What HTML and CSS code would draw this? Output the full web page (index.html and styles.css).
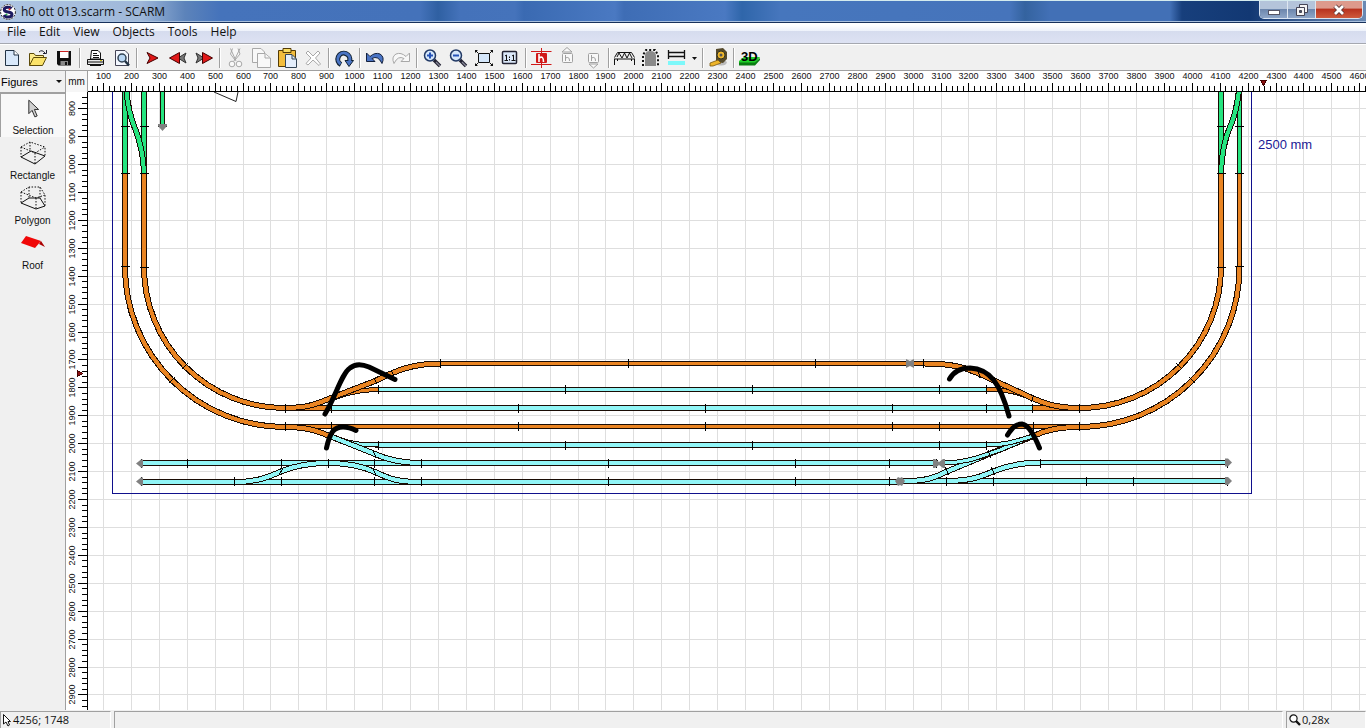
FILE: index.html
```html
<!DOCTYPE html>
<html lang="en">
<head>
<meta charset="utf-8">
<title>h0 ott 013.scarm - SCARM</title>
<link rel="stylesheet" href="styles.css">
</head>
<body>
<header class="titlebar">
  <svg class="app-icon" viewBox="0 0 16 16" aria-hidden="true">
    <circle cx="8" cy="8" r="7.8" fill="#fff"/>
    <circle cx="8" cy="8" r="7.4" fill="none" stroke="#222" stroke-dasharray="2 1"/>
    <path d="M11.5 4.5Q10.5 3.2 8 3.2Q4.200 3.2 4.200 5.600Q4.200 7.600 8 8Q12 8.400 12 10.600Q12 13 8 13Q5 13 4 11" fill="none" stroke="#1d1b60" stroke-width="3"/>
    <circle cx="9.500" cy="5.200" r="1" fill="#e22"/><circle cx="6.500" cy="10.600" r="1" fill="#2a4"/>
  </svg>
  <h1 class="title">h0 ott 013.scarm - SCARM</h1>
  <div class="win-buttons">
    <button class="win-btn" aria-label="Minimize"><svg viewBox="0 0 14 14"><rect x="1.500" y="7.500" width="11" height="4" fill="#fff" stroke="#556"/></svg></button>
    <button class="win-btn" aria-label="Restore"><svg viewBox="0 0 14 14"><path d="M4.500 1.500h8v8h-8z" fill="#f4f4f4" stroke="#445"/><path d="M1.500 4.500h8v8h-8z" fill="#f4f4f4" stroke="#445"/><path d="M4.500 7.500h2v2h-2z" fill="#456" stroke="#445"/></svg></button>
    <button class="win-btn close" aria-label="Close"><svg viewBox="0 0 14 14"><path d="M3 3L11 11M11 3L3 11" stroke="#533" stroke-width="4.500"/><path d="M3 3L11 11M11 3L3 11" stroke="#fff" stroke-width="2.800"/></svg></button>
  </div>
</header>
<nav class="menubar">
  <button>File</button><button>Edit</button><button>View</button><button>Objects</button><button>Tools</button><button>Help</button>
</nav>
<div class="toolbar" role="toolbar">
  <button aria-label="New"><svg viewBox="-12 -12 26 24"><path d="M-6.500-7.500H2L6.500-3V7.500H-6.500Z" fill="#d8e8fa" stroke="#234"/><path d="M2-7.500V-3H6.500" fill="#fff" stroke="#234"/></svg></button>
  <button aria-label="Open"><svg viewBox="-12 -12 26 24"><path d="M-8.500 7.500V-4.500H-4L-2.500-2.500H5.500V0" fill="#fdeb8c" stroke="#5c4a08"/><path d="M-8.500 7.500L-4.500-.5H8.500L4.500 7.500Z" fill="#fbe36a" stroke="#5c4a08"/><path d="M1-6Q4-9 7-5M8.500-8V-4.500H5" fill="none" stroke="#223"/></svg></button>
  <button aria-label="Save"><svg viewBox="-12 -12 26 24"><path d="M-7-7H7V7.500H-5.500L-7 6Z" fill="#111"/><path d="M-4-7H4.500V0H-4Z" fill="#fff"/><path d="M-4-7H4.500V-6H-4Z" fill="#c22"/><path d="M-3.500 3H4V7H-3.500Z" fill="#888"/><path d="M1 4H3V7H1Z" fill="#111"/></svg></button>
  <i class="sep"></i>
  <button aria-label="Print"><svg viewBox="-12 -12 26 24"><path d="M-3.500-7.500H3L5.500-5V1H-4.500Z" fill="#fff" stroke="#111"/><path d="M-2-4.500H2M-2-2.500H4M-2-.5H4" stroke="#111"/><path d="M-7.500 1.500H8.500V6.500H-7.500Z" fill="#e8e8e8" stroke="#111"/><path d="M-7 4H8M-5 7.500H6" stroke="#111"/><path d="M5 2.500H7" stroke="#cb1" /></svg></button>
  <button aria-label="Print preview"><svg viewBox="-12 -12 26 24"><path d="M-5.500-7.500H4L7.500-4V7.500H-5.500Z" fill="#f4f8ff" stroke="#445"/><circle cx="1" cy="0" r="4" fill="#b9d7f5" stroke="#345" stroke-width="1.500"/><path d="M4 3L8 7.500" stroke="#234" stroke-width="2.500"/></svg></button>
  <i class="sep"></i>
  <button aria-label="Start point"><svg viewBox="-12 -12 26 24"><path d="M-5-5.500L6 0L-5 5.500L-2 0Z" fill="#e01818" stroke="#400"/></svg></button>
  <button aria-label="Previous"><svg viewBox="-12 -12 26 24"><path d="M8-5L0 0L8 5L6 0Z" fill="#777" stroke="#333"/><path d="M1.500-5.500L-8.500 0L1.500 5.500V0Z" fill="#e01818" stroke="#400"/></svg></button>
  <button aria-label="Next"><svg viewBox="-12 -12 26 24"><path d="M-8-5L0 0L-8 5L-6 0Z" fill="#777" stroke="#333"/><path d="M-1.500-5.500L8.500 0L-1.500 5.500V0Z" fill="#e01818" stroke="#400"/></svg></button>
  <i class="sep"></i>
  <button aria-label="Cut" disabled><svg viewBox="-12 -12 26 24" fill="#f8f8f8" stroke="#a8a8a8"><path d="M-4.500-9.500L1 3M5-9.500L-1 3M-2.500-9.500L-4.500-4L0 2L5-4L3-9.500"/><circle cx="-3" cy="6" r="2.800"/><circle cx="4" cy="6" r="2.800"/></svg></button>
  <button aria-label="Copy" disabled><svg viewBox="-12 -12 26 24" fill="#f8f8f8" stroke="#a8a8a8"><path d="M-8.500-9.500H0L3.500-6V4.500H-8.500Z"/><path d="M-3.500-4.500H4L9.500 0V9.500H-3.500Z"/><path d="M4-4V0H9"/></svg></button>
  <button aria-label="Paste"><svg viewBox="-12 -12 26 24"><path d="M-8.500-7.500H8.500V8.500H-8.500Z" fill="#f2bd3c" stroke="#543b05"/><path d="M-4-9.500H4V-5.500H-4Z" fill="#f8dc62" stroke="#543b05"/><path d="M-1.500-3.500H5L9.500 1V9.500H-1.500Z" fill="#e4eefb" stroke="#345"/><path d="M5-3V1H9" fill="none" stroke="#345"/></svg></button>
  <button aria-label="Delete" disabled><svg viewBox="-12 -12 26 24" fill="#fff" stroke="#a8a8a8"><path d="M-7-5L-5-7L0-2L5-7L7-5L2.500 0L7.500 6L6 7.500L0 2L-5 7L-7 5.500L-2 0Z"/></svg></button>
  <i class="sep"></i>
  <button aria-label="Rotate"><svg viewBox="-12 -12 26 24"><path d="M-3 6.500A6 6 0 1 1 5.500 3" fill="none" stroke="#123" stroke-width="5"/><path d="M1 2.500H9.500L5 8.500Z" fill="#4a74c4" stroke="#123"/><path d="M-3.500 6A6 6 0 1 1 5.500 3" fill="none" stroke="#4a74c4" stroke-width="3"/></svg></button>
  <i class="sep"></i>
  <button aria-label="Undo"><svg viewBox="-12 -12 26 24"><path d="M-8.500-5V3.500H0L-3 .5Q3-3 7 5.500Q10-1 5-4Q0-6-5-1.500Z" fill="#4a74c4" stroke="#13203d"/></svg></button>
  <button aria-label="Redo" disabled><svg viewBox="-12 -12 26 24"><path d="M8.500-5V3.500H0L3 .5Q-3-3-7 5.500Q-10-1-5-4Q0-6 5-1.500Z" fill="#f8f8f8" stroke="#a8a8a8"/></svg></button>
  <i class="sep"></i>
  <button aria-label="Zoom in"><svg viewBox="-12 -12 26 24"><path d="M2 2L8 8" stroke="#223" stroke-width="3.500"/><path d="M4 4L8 8" stroke="#889" stroke-width="1.200"/><circle cx="-2" cy="-2.500" r="5.500" fill="#d5e7fb" stroke="#223a66" stroke-width="1.500"/><path d="M-5-2.500H1M-2-5.500V.5" stroke="#2452b8" stroke-width="2"/></svg></button>
  <button aria-label="Zoom out"><svg viewBox="-12 -12 26 24"><path d="M2 2L8 8" stroke="#223" stroke-width="3.500"/><path d="M4 4L8 8" stroke="#889" stroke-width="1.200"/><circle cx="-2" cy="-2.500" r="5.500" fill="#d5e7fb" stroke="#223a66" stroke-width="1.500"/><path d="M-5-2.500H1" stroke="#2452b8" stroke-width="2"/></svg></button>
  <button aria-label="Fit to window"><svg viewBox="-12 -12 26 24"><path d="M-5.500-4.500H5.500V4.500H-5.500Z" fill="#d5e7fb" stroke="#111"/><path d="M-8.500-7.500L-6-5M8.500-7.500L6-5M-8.500 7.500L-6 5M8.500 7.500L6 5" stroke="#111"/><path d="M-9-5V-8H-6ZM9-5V-8H6ZM-9 5V8H-6ZM9 5V8H6Z" fill="#111"/></svg></button>
  <button aria-label="Actual size"><svg viewBox="-12 -12 26 24"><rect x="-7.500" y="-6.500" width="14" height="12" rx="1" fill="#dbe8fa" stroke="#223" stroke-width="1.500"/><path d="M-5-2L-3.500-3V2.500M-5.500 2.500H-2M2-2L3.500-3V2.500M1.500 2.500H5.500M-.5-1.500V0M-.5 1V2.500" fill="none" stroke="#111"/></svg></button>
  <i class="sep"></i>
  <button aria-label="Heights"><svg viewBox="-12 -12 26 24"><path d="M-10-6.500H10.500M-10 6.500H10.500M.5-10V10" stroke="#d01818"/><rect x="-5" y="-5" width="11" height="10" rx="1" fill="#d01818"/><path d="M-2-4V4M-2 0Q2.500-3 2.500 4" fill="none" stroke="#fff" stroke-width="1.600"/></svg></button>
  <button aria-label="Raise" disabled><svg viewBox="-12 -12 26 24" fill="#f8f8f8" stroke="#a0a0a0"><path d="M-5-6L0-10.500L5-6Z"/><rect x="-4.500" y="-4.500" width="10" height="9" rx="1"/><path d="M-1.500-3V3M-1.500 0Q2.500-2 2.500 3"/></svg></button>
  <button aria-label="Lower" disabled><svg viewBox="-12 -12 26 24" fill="#f8f8f8" stroke="#a0a0a0"><path d="M-4 6L.5 10L5 6Z"/><rect x="-4.500" y="-4.500" width="10" height="9" rx="1"/><path d="M-1.500-3V3M-1.500 0Q2.500-2 2.500 3"/></svg></button>
  <i class="sep"></i>
  <button aria-label="Bridge"><svg viewBox="-12 -12 26 24" fill="none" stroke="#111"><path d="M-9.500-.5L-6.500-5.500H7.500L10.500-.5M-10 1H11M-9.500 1V7M10.500 1V7M-6.500 1V3M7.500 1V3M-7-1L-5-5L-2 0L.5-5L3 0L5.500-5L8 0" /></svg></button>
  <button aria-label="Tunnel"><svg viewBox="-12 -12 26 24"><path d="M-5 8V-2Q-5-7 0-7Q6-7 6-2V8Z" fill="#8a8a8a"/><path d="M-7 8V-3L-4-8H5L8-3V8" fill="none" stroke="#111" stroke-width="2" stroke-dasharray="2 2"/></svg></button>
  <button aria-label="Track style"><svg viewBox="-12 -12 26 24"><path d="M-8-5.500H9M-8-1.500H9M-7.500-8V1M8.500-8V1" stroke="#111" stroke-width="1.300"/><path d="M-8 3H9V7H-8Z" fill="#7df8fa"/></svg></button>
  <button class="drop" aria-label="Track style options"><svg viewBox="0 0 11 24"><path d="M2 11H7L4.500 14Z" fill="#111"/></svg></button>
  <i class="sep"></i>
  <button aria-label="Measure"><svg viewBox="-12 -12 26 24"><path d="M-1 7Q8 9 9 4L6 2Z" fill="#bbb"/><path d="M-2-9L5-10L9-6V1L5 5L-2 4Z" fill="#554a2c"/><circle cx="3" cy="-3" r="4" fill="#f0b729" stroke="#332"/><circle cx="3" cy="-3" r="1.500" fill="#555"/><path d="M0 2L-8 5V8H-5L3 5Z" fill="#edb429" stroke="#775510" stroke-width=".8"/></svg></button>
  <i class="sep"></i>
  <button aria-label="3D view"><svg viewBox="-12 -12 26 24"><path d="M-10 3L-5-1H11L6 6H-10Z" fill="#1fd329"/><path d="M-10 4.500H6L11 0V2L6 7.500H-10Z" fill="#0a7d12"/><text class="label-3d" x="-8" y="3">3D</text></svg></button>
</div>
<main class="workspace">
  <aside class="palette">
    <div class="palette-head">
      <select class="palette-select" aria-label="Object library"><option>Figures</option></select>
      <svg class="caret" viewBox="0 0 6 4" aria-hidden="true"><path d="M0 0H6L3 3Z" fill="#111"/></svg>
    </div>
    <button class="tool active"><svg viewBox="0 0 28 28"><path d="M9.500 4.500V19L13 15.500L16 22.500L18.500 21.500L15.500 14.500H20Z" fill="#d0d0d0" stroke="#222"/></svg><span>Selection</span></button>
    <button class="tool"><svg viewBox="0 0 28 28" fill="none" stroke="#111"><path d="M2 18L12 12L26 17L16 25Z"/><path d="M2 8L11 3L26 8V17M2 8V18M2 8L16 14L26 8M16 14V25M11 3V12" stroke-dasharray="1.500 1.500"/></svg><span>Rectangle</span></button>
    <button class="tool"><svg viewBox="0 0 28 28" fill="none" stroke="#111"><path d="M2 19L10 14H21L26 22L17 25Z"/><path d="M2 8L10 3H21L26 11V22M2 8V19M2 8L17 14L26 11M17 14V25M10 3V14M21 3V14" stroke-dasharray="1.500 1.500"/></svg><span>Polygon</span></button>
    <button class="tool"><svg viewBox="0 0 28 28"><path d="M2 14L7 7L22 12L16 19Z" fill="#f00808"/><path d="M22 12L26 18L20 15Z" fill="#a00"/></svg><span>Roof</span></button>
  </aside>
  <div class="unit">mm</div>
  <svg class="ruler" id="ruler-x" role="img" aria-label="Horizontal ruler"></svg>
  <svg class="ruler" id="ruler-y" role="img" aria-label="Vertical ruler"></svg>
  <svg class="plan" id="plan" role="img" aria-label="Track plan">
    <g transform="translate(-88 -92)">
      <g id="grid"></g>
      <path class="bounds" d="M112.500 80V493.500H1251.500V80"/>
      <path class="thin" d="M214 92L236 101.500L238 92"/>
      <g id="tracks"></g>
      <g id="joints"></g>
      <g class="stops">
        <path d="M158 124H167V126L162.500 131L158 126Z"/>
        <path d="M136 463.500L141 459.500H143V467.500H141ZM136 481.500L141 477.500H143V485.500H141Z"/>
        <path d="M1232 462.500L1228 458.500H1225V466.500H1228ZM1232 481L1228 477H1225V485H1228Z"/>
        <path d="M906 359L910 361L914 359V368L910 366L906 368Z"/>
        <path d="M933 459H935L939 462L943 459H945V468H943L939 465L935 468H933Z"/>
        <path d="M895 481L898 477L900 478L902 477L905 481L902 486L900 485L898 486Z"/>
      </g>
      <g class="marks">
        <path d="M325 414C335 398 342 373 350 368C356 363 362 364 369 367L395 379.500"/>
        <path d="M326.500 448C330 432 334 427 343 427Q349 427 356 430.500"/>
        <path d="M949.500 379C954 371 962 368 970 368C990 369 1000 383 1009 416"/>
        <path d="M1007.500 435C1013 426 1017 424 1022 424C1029 425 1035 437 1039.500 448"/>
      </g>
      <text class="dimension" x="1258" y="149">2500 mm</text>
    </g>
  </svg>
</main>
<footer class="statusbar">
  <div class="cell coords"><svg viewBox="0 0 10 14" aria-hidden="true"><path d="M1.500 1.500V11L4 9L6 13L7.500 12L6 8.500H8.500Z" fill="#fff" stroke="#111"/></svg>4256; 1748</div>
  <div class="cell message"></div>
  <div class="cell scale"><svg viewBox="0 0 12 12" aria-hidden="true"><circle cx="4.500" cy="4.500" r="3.600" fill="#fff" stroke="#111" stroke-width="1.200"/><path d="M7 7L11 11" stroke="#111" stroke-width="2.400"/></svg>0,28x</div>
</footer>
<script src="script.js"></script>
</body>
</html>
```
FILE: styles.css
```css
* { box-sizing: border-box; }
body { margin: 0; height: 100vh; display: flex; flex-direction: column; overflow: hidden; background: #f0f0f0; color: #111; font: 12px "Open Sans", sans-serif; }
button { margin: 0; padding: 0; border: 0; background: none; color: inherit; font: inherit; }
svg { display: block; }

.titlebar { flex: none; height: 23px; display: flex; align-items: center; border-top: 1px solid #d4ebee; border-bottom: 1px solid #17315c;
  box-shadow: inset 0 -1px #a9c0de;
  background: linear-gradient(90deg, #aec5e2 0, #9fb8d9 140px, #5c83ba 185px, #4573bb 220px, #4472ba 420px, #2f60a2 438px, #4472ba 460px, #4573bb 515px, #3a6ab2 524px, #4a79c2 615px, #3e6db5 624px, #4a79c2 725px, #2f66aa 742px, #4676bd 780px, #4674bb 1010px, #34639f 1025px, #4270b6 1050px, #4270b6 1170px, #173f7c 1182px, #123873 1250px, #6b8ab4 100%); }
.app-icon { width: 16px; height: 16px; }
.title { flex: 1; margin: 0 0 0 5px; font-size: 12px; line-height: 20px; font-weight: 400; }
.win-buttons { display: flex; align-self: flex-start; height: 18px; margin-right: 3px; border: 1px solid #d9e4f2; border-top: 0; border-radius: 0 0 5px 5px; overflow: hidden; }
.win-btn { width: 28px; display: grid; place-items: center; border-right: 1px solid #dde6f0; background: linear-gradient(#b4c4da 45%, #6d87ad 50%, #8ea6c8); }
.win-btn svg { width: 14px; height: 14px; }
.win-btn.close { width: 46px; border: 0; background: linear-gradient(#dd9a8c 40%, #b83420 50%, #cf5a3c); }

.menubar { flex: none; height: 21px; display: flex; border-bottom: 1px solid #a5a8b0; padding: 0 7px 2px; gap: 13px;
  background: linear-gradient(#fff 10%, #eef2fb 38%, #d6dcee 42%, #dde2f3); line-height: 18px; }

.toolbar { flex: none; height: 27px; display: flex; align-items: center; border-top: 1px solid #fff; border-bottom: 1px solid #a0a0a0; }
.toolbar svg { width: 26px; height: 24px; }
.toolbar .drop svg { width: 11px; }
.sep { width: 5px; height: 20px; background: linear-gradient(90deg, transparent 1px, #a0a0a0 1px 2px, #fff 2px 3px, transparent 3px); }
.label-3d { font: bold 13px "Liberation Sans", sans-serif; fill: #000; }

.workspace { flex: 1; min-height: 0; display: grid; grid-template: 21px minmax(0, 1fr) / 66px 22px minmax(0, 1fr); background: #fff; }
.palette { grid-row: 1 / 3; background: #f0f0f0; border-right: 1px solid #a0a0a0; font: 10px "Liberation Sans", sans-serif; }
.palette-head { height: 22px; display: flex; align-items: center; padding: 0 3px 0 1px; border-bottom: 1px solid #a0a0a0; }
.palette-select { flex: 1; min-width: 0; padding: 0; border: 0; appearance: none; background: none; color: #000; font: 11px "Liberation Sans", sans-serif; }
.caret { width: 6px; height: 4px; }
.tool { width: 100%; height: 45px; padding-top: 2px; display: flex; flex-direction: column; align-items: center; gap: 3px; line-height: 12px; }
.tool svg { width: 28px; height: 28px; }
.tool.active { height: 44px; border-left: 1px solid #a0a0a0; border-top: 1px solid #a0a0a0; background: #f8f8f8; }
.unit { display: grid; place-items: center; border-right: 1px solid #a0a0a0; background: #f6f6f6; font: 10px "Liberation Sans", sans-serif; }
.ruler, .plan { width: 100%; height: 100%; overflow: hidden; background: #fff; }
.ruler text { font: 9px "Liberation Sans", sans-serif; text-anchor: middle; fill: #111; }
.ruler path { fill: none; stroke: #000; shape-rendering: crispEdges; }
.ruler .cursor { fill: #8c1010; stroke: #400; }
#grid path { stroke: #dedede; fill: none; shape-rendering: crispEdges; }
.bounds { fill: none; stroke: #10108c; shape-rendering: crispEdges; }
.thin { fill: none; stroke: #222; }
.edge, .bed { fill: none; shape-rendering: crispEdges; }
.edge { stroke: #1a0c04; }
.bed.main { stroke: #e98422; }
.bed.yard { stroke: #91f5f6; }
.bed.hill { stroke: #25e47f; }
#joints path { stroke: #000; shape-rendering: crispEdges; }
.stops { fill: #808080; }
.marks { fill: none; stroke: #000; stroke-width: 5; stroke-linecap: round; stroke-linejoin: round; }
.dimension { font: 13px "Liberation Sans", sans-serif; fill: #1a1a96; }

.statusbar { flex: none; height: 18px; display: flex; gap: 3px; padding-top: 1px; background: #f0f0f0; font-size: 11px; line-height: 16px; }
.cell { display: flex; align-items: center; gap: 1px; border-top: 1px solid #a0a0a0; border-left: 1px solid #a0a0a0; border-right: 1px solid #fff; }
.coords { width: 111px; padding-left: 1px; }
.coords svg { width: 10px; height: 14px; }
.message { flex: 1; }
.scale { width: 80px; padding-left: 2px; }
.scale svg { width: 12px; height: 12px; }
```
FILE: script.js
```js
const NS = 'http://www.w3.org/2000/svg';
const SCALE = 0.2792;
const xAt = mm => Math.floor(75.5 + mm * SCALE) + 0.5;
const yAt = mm => Math.floor(-114.7 + mm * SCALE) + 0.5;

function add(parent, name, attrs, text) {
  const el = document.createElementNS(NS, name);
  for (const key in attrs) el.setAttribute(key, attrs[key]);
  if (text) el.textContent = text;
  parent.appendChild(el);
}

function drawRulers() {
  const rx = document.getElementById('ruler-x');
  const ry = document.getElementById('ruler-y');
  const grid = document.getElementById('grid');
  [rx, ry, grid].forEach(el => el.replaceChildren());
  const right = 88 + rx.clientWidth, bottom = 92 + ry.clientHeight;
  let ticks = 'M0 20.5H' + rx.clientWidth, lines = '';
  for (let mm = 60; xAt(mm) < right; mm += 20) {
    const x = xAt(mm) - 88, major = mm % 100 === 0;
    ticks += `M${x} ${major ? 12 : 15}V20`;
    if (major) {
      add(rx, 'text', { x: x, y: 8 }, String(mm));
      lines += `M${xAt(mm)} 92V${bottom}`;
    }
  }
  add(rx, 'path', { d: ticks });
  add(rx, 'path', { class: 'cursor', d: 'M1172.5 9.5H1178.5L1175.5 14.5Z' });
  ticks = 'M21.5 0V' + ry.clientHeight;
  for (let mm = 760; yAt(mm) < bottom; mm += 20) {
    const y = yAt(mm) - 92, major = mm % 100 === 0;
    ticks += `M${major ? 12 : 16} ${y}H21`;
    if (major) {
      add(ry, 'text', { transform: `translate(9 ${y}) rotate(-90)` }, String(mm));
      lines += `M88 ${yAt(mm)}H${right}`;
    }
  }
  add(ry, 'path', { d: ticks });
  add(ry, 'path', { class: 'cursor', d: 'M11.5 278.5V284.5L16.5 281.5Z' });
  add(grid, 'path', { d: lines });
}

// [kind, outer width, centre line]
const tracks = [
  ['yard', 6, 'M141 463H938'],
  ['yard', 6, 'M141 482H900'],
  ['yard', 6, 'M900 481H1229'],
  ['yard', 5, 'M1040 462.5H1229'],
  ['yard', 6, 'M234 482C258 482 268 477 281 471.500S310 463 328 463S362 466 375 472S396 482 421 482'],
  ['yard', 6, 'M905 481C930 481 937 476 947 471.500L989 454L1032 436.500'],
  ['yard', 6, 'M946 481C972 481 982 476 993 471.500S1018 462.500 1040 462.500'],
  ['yard', 5, 'M943 463C968 463 984 455 1000 450L1032 436.500'],
  ['yard', 6, 'M375 445H986'],
  ['yard', 5, 'M986 445C1008 445 1015 441 1032 436.500'],
  ['yard', 5, 'M331 436.500C348 443 358 445 378 445'],
  ['yard', 6, 'M331 436.500L375 454C388 460 402 463 421 463'],
  ['yard', 5, 'M378 389.500H986'],
  ['yard', 6, 'M331 408H1032'],
  ['main', 6, 'M285 408H331M1032 408H1080'],
  ['main', 5, 'M285 426.500H1080'],
  ['main', 6, 'M285 427C308 427 317 431 331 436.500'],
  ['main', 6, 'M1032 436.500C1046 430 1058 427 1080 427'],
  ['main', 5, 'M285 408C325 408 338 389.500 378 389.500'],
  ['main', 5, 'M986 389.500C1010 389.500 1020 393 1032 398.500S1056 408 1080 408'],
  ['main', 6, 'M285 408C309 408 319 403 331 398L375 381C390 374 408 363.500 440 363.500'],
  ['main', 5, 'M440 363.500H925'],
  ['main', 6, 'M925 363.500C955 363.500 968 369 980 374L1032 398C1043 403 1056 408 1080 408'],
  ['main', 6, 'M125 173V267A160 160 0 0 0 285 427'],
  ['main', 6, 'M144 173V267A141 141 0 0 0 285 408'],
  ['main', 5, 'M1239.500 173V267'],
  ['main', 6, 'M1239.500 267A160 160 0 0 1 1080 427'],
  ['main', 6, 'M1221 173V267A141 141 0 0 1 1080 408'],
  ['hill', 6, 'M125 80V173'],
  ['hill', 6, 'M144 80V173'],
  ['hill', 5, 'M162.500 80V127'],
  ['hill', 5, 'M1239.500 80V173'],
  ['hill', 6, 'M1221 80V173'],
  ['hill', 6, 'M126 84C127 104 130 116 134.500 127S143 150 144 172'],
  ['hill', 6, 'M1239.500 84C1238 104 1235 116 1230 127S1222 150 1221 172']
];

// joint marks: [centre y, x positions] and [centre x, y positions]
const crossJoints = [
  [363.5, [440, 628, 815, 923]],
  [389.5, [378, 565, 752, 939, 986]],
  [408, [285, 331, 518, 705, 892, 986, 1032, 1079]],
  [426.5, [285, 331, 518, 705, 892, 939, 1033, 1079]],
  [445, [378, 565, 752, 939, 986]],
  [463, [141, 187, 281, 328, 374, 421, 608, 795, 889, 936, 944, 1040, 1227]],
  [481.5, [141, 234, 281, 374, 421, 608, 795, 889, 946, 993, 1086, 1133, 1227]]
];
const railJoints = [
  [125, [126, 173, 266]], [144, [126, 173, 267]], [162.5, [126]],
  [1221, [126, 173, 267]], [1239.5, [126, 173, 266]]
];

const trackLayer = document.getElementById('tracks');
for (const [kind, width, d] of tracks) {
  add(trackLayer, 'path', { class: 'edge', 'stroke-width': width, d });
  add(trackLayer, 'path', { class: 'bed ' + kind, 'stroke-width': width - 2, d });
}
let joints = '';
for (const [y, xs] of crossJoints) for (const x of xs) joints += `M${x + 0.5} ${y - 4.5}V${y + 4.5}`;
for (const [x, ys] of railJoints) for (const y of ys) joints += `M${x - 4.5} ${y + 0.5}H${x + 4.5}`;
joints += 'M169 383L175 377M182 369L188 363M1176 363L1182 369M1189 377L1195 383';
joints += 'M374 378L377 384M391 370L394 376M373 450L376 458M373 468L376 476M279 475L283 468';
joints += 'M945 467L949 475M988 450L991 458M991 467L995 475M1031 402L1034 395M978 370L980 378';
add(document.getElementById('joints'), 'path', { d: joints });

drawRulers();
window.addEventListener('resize', drawRulers);
```
